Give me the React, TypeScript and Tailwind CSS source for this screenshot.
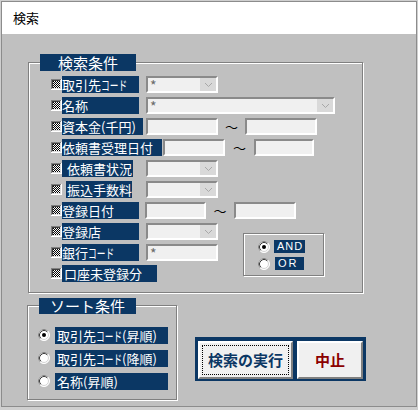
import React from 'react';

const NAVY = 'bg-[#0b3764]';

// dithered "indeterminate" classic checkbox
const Check: React.FC = () => (
    <svg width="11" height="11" className="shrink-0 block">
        <defs>
            <pattern id="dither" width="2" height="2" patternUnits="userSpaceOnUse">
                <rect width="2" height="2" fill="#ffffff" />
                <rect width="1" height="1" fill="#000000" />
                <rect x="1" y="1" width="1" height="1" fill="#000000" />
            </pattern>
        </defs>
        <rect width="11" height="11" fill="#ffffff" />
        <rect width="10" height="1" fill="#808080" />
        <rect width="1" height="10" fill="#808080" />
        <rect x="1" y="1" width="8" height="1" fill="#404040" />
        <rect x="1" y="1" width="1" height="8" fill="#404040" />
        <rect x="9" y="1" width="1" height="9" fill="#dcdcdc" />
        <rect x="1" y="9" width="9" height="1" fill="#dcdcdc" />
        <rect x="2" y="2" width="7" height="7" fill="url(#dither)" />
    </svg>
);

const Radio: React.FC<{ checked?: boolean }> = ({ checked }) => (
    <svg width="12" height="12" className="shrink-0 block">
        <circle cx="6" cy="6" r="5.5" fill="#ffffff" stroke="#ffffff" />
        <path d="M2.11 9.89 A5.5 5.5 0 0 1 9.89 2.11" fill="none" stroke="#808080" />
        <circle cx="6" cy="6" r="4.5" fill="#ffffff" stroke="#d4d4d4" />
        <path d="M2.82 9.18 A4.5 4.5 0 0 1 9.18 2.82" fill="none" stroke="#404040" />
        {checked && <circle cx="6" cy="6" r="2" fill="#000000" />}
    </svg>
);

// narrow "コード" like the half-width kana of the original form font
const Code: React.FC = () => (
    <span className="inline-block w-[26px] align-top">
        <span className="inline-block origin-left scale-x-[0.67]">コード</span>
    </span>
);

const Label: React.FC<{ className: string; children: React.ReactNode }> = ({ className, children }) => (
    <div className={`h-[17px] ${NAVY} text-white text-[13px] leading-[17px] whitespace-nowrap shrink-0 ${className}`}>
        {children}
    </div>
);

const Field: React.FC<{ className: string; text?: string; children?: React.ReactNode }> = ({ className, text, children }) => (
    <div
        className={`h-[17px] shrink-0 flex items-stretch justify-between bg-[#f0f0f0] border-2 border-t-[#8a8a8a] border-l-[#8a8a8a] border-b-white border-r-white ${className}`}
    >
        <span className="pl-[2px] text-[14px] leading-[15px] text-[#6a6a6a]">{text}</span>
        {children}
    </div>
);

const Combo: React.FC<{ className: string; text?: string }> = ({ className, text }) => (
    <Field className={className} text={text}>
        <div className="w-[16px] bg-[#d9d9d9] flex items-center justify-center">
            <svg width="9" height="6">
                <path d="M1 1 L4.5 4.5 L8 1" fill="none" stroke="#a8a8a8" strokeWidth="1" />
            </svg>
        </div>
    </Field>
);

const Tilde: React.FC<{ className: string }> = ({ className }) => (
    <div className={`shrink-0 text-center text-[13px] leading-[13px] text-black ${className}`}>〜</div>
);

const Row: React.FC<{ children: React.ReactNode }> = ({ children }) => (
    <div className="flex items-center h-[17px]">
        <Check />
        {children}
    </div>
);

const etched = 'border border-[#808080] shadow-[1px_1px_0_#ffffff,inset_1px_1px_0_#ffffff]';

export default function App() {
    return (
        <div
            className="w-[418px] h-[410px] bg-[#cfcfcf] pt-[1px] pl-[1px]"
            style={{ fontFamily: '"Noto Sans CJK JP", "Noto Sans", sans-serif' }}
        >
            <div className="w-[416px] h-[406px] border border-[#8c8c8c] bg-[#c0c0c0] flex flex-col">
                {/* title bar */}
                <div className="h-[32px] bg-white flex items-center pl-[11px] text-[13px] text-black shrink-0">
                    検索
                </div>

                {/* 検索条件 frame */}
                <div className={`relative mt-[28px] ml-[26px] w-[335px] h-[231px] ${etched}`}>
                    <div className={`absolute -top-[9px] left-[11px] w-[96px] h-[17px] ${NAVY} text-white text-[15px] leading-[17px] text-center`}>
                        検索条件
                    </div>

                    <div className="flex flex-col gap-[4px] pt-[13px] pl-[22px]">
                        <Row>
                            <Label className="w-[77px]">取引先<Code /></Label>
                            <Combo className="ml-[7px] w-[72px]" text="*" />
                        </Row>
                        <Row>
                            <Label className="w-[77px]">名称</Label>
                            <Combo className="ml-[7px] w-[189px]" text="*" />
                        </Row>
                        <Row>
                            <Label className="w-[81px]">資本金(千円)</Label>
                            <Field className="ml-[3px] w-[72px]" />
                            <Tilde className="w-[27px]" />
                            <Field className="w-[72px]" />
                        </Row>
                        <Row>
                            <Label className="w-[100px]">依頼書受理日付</Label>
                            <Field className="ml-[1px] w-[62px]" />
                            <Tilde className="w-[29px]" />
                            <Field className="w-[60px]" />
                        </Row>
                        <Row>
                            <Label className="w-[71px] pl-[5px]">依頼書状況</Label>
                            <Combo className="ml-[13px] w-[72px]" />
                        </Row>
                        <Row>
                            <Label className="ml-[4px] w-[66px] pl-[1px]">振込手数料</Label>
                            <Combo className="ml-[14px] w-[72px]" />
                        </Row>
                        <Row>
                            <Label className="w-[77px]">登録日付</Label>
                            <Field className="ml-[6px] w-[61px]" />
                            <Tilde className="w-[28px]" />
                            <Field className="w-[62px]" />
                        </Row>

                        <div className="flex items-start">
                            <div className="flex flex-col gap-[4px] w-[167px] shrink-0">
                                <Row>
                                    <Label className="w-[77px]">登録店</Label>
                                    <Combo className="ml-[7px] w-[72px]" />
                                </Row>
                                <Row>
                                    <Label className="w-[77px]">銀行<Code /></Label>
                                    <Field className="ml-[7px] w-[72px]" text="*" />
                                </Row>
                                <Row>
                                    <Label className="w-[95px] pl-[2px]">口座未登録分</Label>
                                </Row>
                            </div>

                            {/* AND / OR */}
                            <div className={`ml-[25px] mt-[10px] w-[81px] h-[43px] shrink-0 ${etched} flex flex-col gap-[4px] pt-[6px] pl-[14px]`}>
                                <div className="flex items-center h-[13px]">
                                    <Radio checked />
                                    <div className={`ml-[4px] w-[31px] h-[13px] ${NAVY} text-white text-[11px] leading-[13px] pl-[3px] tracking-[1px]`} style={{ fontFamily: '"Liberation Sans", Arial, sans-serif' }}>
                                        AND
                                    </div>
                                </div>
                                <div className="flex items-center h-[13px]">
                                    <Radio />
                                    <div className={`ml-[5px] w-[29px] h-[13px] ${NAVY} text-white text-[11px] leading-[13px] pl-[3px] tracking-[2px]`} style={{ fontFamily: '"Liberation Sans", Arial, sans-serif' }}>
                                        OR
                                    </div>
                                </div>
                            </div>
                        </div>
                    </div>
                </div>

                {/* bottom section */}
                <div className="flex items-start mt-[12px] ml-[25px]">
                    <div className={`relative w-[150px] h-[95px] shrink-0 ${etched}`}>
                        <div className={`absolute -top-[8px] left-[11px] w-[97px] h-[16px] ${NAVY} text-white text-[15px] leading-[16px] text-center`}>
                            ソート条件
                        </div>
                        <div className="flex flex-col gap-[7px] pt-[21px] pl-[10px]">
                            <div className="flex items-center h-[16px]">
                                <Radio checked />
                                <Label className="ml-[5px] w-[113px] h-[16px] leading-[16px] pl-[2px]">取引先<Code />(昇順)</Label>
                            </div>
                            <div className="flex items-center h-[16px]">
                                <Radio />
                                <Label className="ml-[5px] w-[113px] h-[16px] leading-[16px] pl-[2px]">取引先<Code />(降順)</Label>
                            </div>
                            <div className="flex items-center h-[16px]">
                                <Radio />
                                <Label className="ml-[5px] w-[113px] h-[16px] leading-[16px] pl-[2px]">名称(昇順)</Label>
                            </div>
                        </div>
                    </div>

                    <div className={`ml-[18px] mt-[32px] flex gap-[4px] pt-[4px] pb-[2px] px-[3px] ${NAVY}`}>
                        <button className="w-[95px] h-[38px] bg-[#f0f0f0] border-2 border-t-white border-l-white border-b-[#808080] border-r-[#808080] outline-1 outline-dotted outline-black outline-offset-[-5px] text-[15px] font-bold text-[#0b3764]">
                            検索の実行
                        </button>
                        <button className="w-[66px] h-[38px] bg-[#f0f0f0] border-2 border-t-white border-l-white border-b-[#808080] border-r-[#808080] text-[15px] font-bold text-[#8b0000]">
                            中止
                        </button>
                    </div>
                </div>
            </div>
        </div>
    );
}
